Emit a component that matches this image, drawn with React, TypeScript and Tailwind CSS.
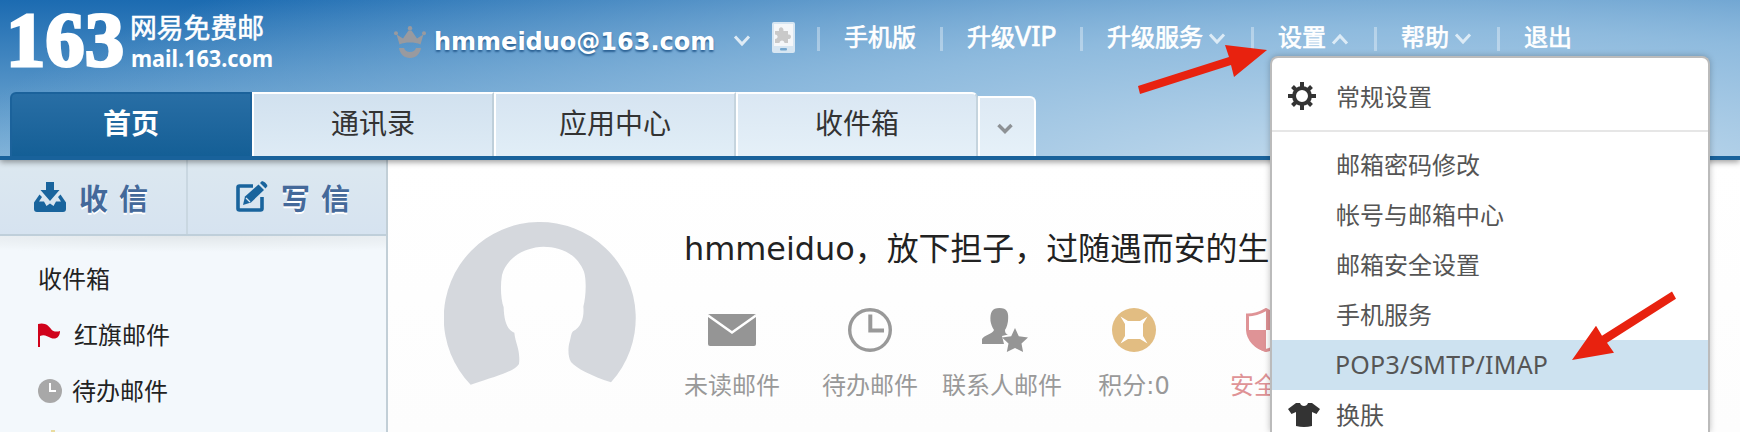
import React from "react";

const Chevron = ({ up = false, className = "" }: { up?: boolean; className?: string }) => (
  <svg width="18" height="14" viewBox="0 0 18 14" className={className}>
    <path
      d={up ? "M2 11.500 9 4l7 7.500" : "M2 2.500 9 10l7-7.500"}
      fill="none"
      stroke="currentColor"
      strokeWidth="3"
    />
  </svg>
);

const Logo = () => (
  <div className="flex w-[290px] shrink-0 pt-[6px] pl-[8px]">
    <svg width="120" height="72" viewBox="0 0 120 72" fill="#fff" stroke="#fff" strokeWidth="3" className="shrink-0">
      <text x="-2" y="59.500" fontSize="79" fontWeight="700" fontFamily="Liberation Serif" textLength="118" lengthAdjust="spacingAndGlyphs">
        163
      </text>
    </svg>
    <div className="ml-[2px] pt-[8px] whitespace-nowrap">
      <div className="text-[26.800px] leading-[30px] [-webkit-text-stroke:0.6px_white]">网易免费邮</div>
      <svg width="150" height="32" viewBox="0 0 150 32" fill="#fff" className="block">
        <text x="1" y="22.500" fontSize="24" fontWeight="700" fontFamily="Noto Sans, sans-serif" textLength="142" lengthAdjust="spacingAndGlyphs">
          mail.163.com
        </text>
      </svg>
    </div>
  </div>
);

const Crown = () => (
  <svg width="32" height="32" viewBox="0 0 32 32" fill="#999a9f">
    <path d="M5.500 18.500 2.600 8.500 9 12.500l5.500-8h3l5.500 8 6.400-4L26.500 18.500c-3-1.500-6.500-2-10.500-2s-7.500.5-10.500 2z" />
    <circle cx="16" cy="2.200" r="2.200" />
    <circle cx="2" cy="7.300" r="2" />
    <circle cx="30" cy="7.300" r="2" />
    <path d="M5 22h5c.8 2.800 3 4 6 4s5.200-1.200 6-4h5c-1 6-5 10-11 10S6 28 5 22z" />
  </svg>
);

const PhoneIcon = () => (
  <svg width="23" height="31" viewBox="0 0 23 31">
    <rect width="23" height="31" rx="2" fill="#d7e6f2" />
    <rect x="2" y="2" width="19" height="22" fill="#f5f7f9" />
    <path d="M3 9h4c-1-5 5-5 4.500 0H16v3.500c4-1 4 5 0 4.500V21h-3.500c0-3.500-5-3.500-5 0H3v-4c3.500 0 3.500-4.500 0-4.500z" fill="#c9c9c9" />
    <rect x="8" y="26" width="7" height="2.500" rx="1" fill="#77a8cf" />
  </svg>
);

const navItems = [
  { label: "手机版", w: "w-[123px]", arrow: "" },
  { label: "升级", latin: "VIP", w: "w-[140px]", arrow: "" },
  { label: "升级服务", w: "w-[171px]", arrow: "down" },
  { label: "设置", w: "w-[123px]", arrow: "up" },
  { label: "帮助", w: "w-[123px]", arrow: "down" },
  { label: "退出", w: "w-[123px]", arrow: "" },
];

const TopBar = () => (
  <div className="flex h-[92px] items-start text-white">
    <Logo />
    <div className="ml-[104px] flex h-[74px] items-center">
      <div className="mt-[10px]"><Crown /></div>
      <span className="ml-[8px] w-[285px] pt-[9px] text-[24px] leading-8 font-bold [text-shadow:0_2px_2px_#2b6194]">
        hmmeiduo@163.com
      </span>
      <Chevron className="mt-2 ml-[14px] text-[#dfebf5]" />
      <div className="ml-[21px]"><PhoneIcon /></div>
    </div>
    <nav className="ml-[22px] flex h-[76px] items-center">
      {navItems.map((n) => (
        <div key={n.label + n.w} className={`flex shrink-0 items-center ${n.w}`}>
          <i className="mt-[2px] mr-6 h-6 w-[3px] bg-white/35" />
          <span className="text-[24px] leading-8 whitespace-nowrap [-webkit-text-stroke:0.7px_white]">
            {n.label}
            {n.latin && <span className="text-[27px] leading-7 [font-family:'Noto_Sans']">{n.latin}</span>}
          </span>
          {n.arrow && <Chevron up={n.arrow === "up"} className="mt-[2px] ml-[5px] shrink-0 text-[#dcebf6]" />}
        </div>
      ))}
    </nav>
  </div>
);

const Tabs = () => (
  <div className="flex h-16 items-end pl-[10px] text-[28px] text-[#333]">
    <div className="flex h-16 w-[242px] items-center justify-center rounded-tl-md border-2 border-b-0 border-[#1b629b] bg-linear-to-b from-[#286ea5] to-[#145f96] font-bold text-white">
      首页
    </div>
    <div className="flex h-16 w-[242px] items-center justify-center border-t-2 border-r-2 border-l-2 border-white border-r-[#becfda] bg-linear-to-b from-[#d1e1ef] to-[#deebf5]">
      通讯录
    </div>
    <div className="flex h-16 w-[242px] items-center justify-center border-t-2 border-r-2 border-l-2 border-white border-r-[#c5d4de] bg-linear-to-b from-[#d6e4f1] to-[#e1eef7]">
      应用中心
    </div>
    <div className="flex h-16 w-[242px] items-center justify-center rounded-tr-md border-t-2 border-r-2 border-l-2 border-white border-r-[#c5d4de] bg-linear-to-b from-[#dae7f3] to-[#e5f0f8]">
      收件箱
    </div>
    <div className="flex h-[60px] w-[58px] items-center justify-center rounded-tr-md border-2 border-b-0 border-white bg-linear-to-b from-[#dde9f4] to-[#e6f1f9] pt-1 pr-[4px]">
      <svg width="16" height="12" viewBox="0 0 16 12">
        <path d="M1.500 2 8 8.500 14.500 2" fill="none" stroke="#8d9195" strokeWidth="3.500" />
      </svg>
    </div>
  </div>
);

const InboxIcon = () => (
  <svg width="32" height="30" viewBox="0 0 32 30" fill="#19649d">
    <path d="M12 0h8v8h5.500L16 19 6.500 8H12z" />
    <path d="M5.500 12.500 8 15l-3 4.500h5l2.500 4.500 3.500-2.500 3.500 2.500 2.500-4.500h5L24 15l2.500-2.500L32 20.500V27q0 3-3 3H3q-3 0-3-3v-6.500z" />
  </svg>
);

const WriteIcon = () => (
  <svg width="32" height="32" viewBox="0 0 32 32">
    <path d="M17 5H3.500A1.500 1.500 0 0 0 2 6.500v21A1.500 1.500 0 0 0 3.500 29h21a1.500 1.500 0 0 0 1.500-1.500V16" fill="none" stroke="#19649d" strokeWidth="3.600" />
    <path d="m7 24 2-8.500L22.500 3.500l5.500 5.500L15 21.500z" fill="#19649d" />
    <path d="m24 2 2-2q4 1 5.500 5L29.500 7.500z" fill="#19649d" />
    <path d="m10 17 4 4" stroke="#d9e6f1" strokeWidth="1.200" />
  </svg>
);

const Sidebar = () => (
  <aside className="flex h-[272px] w-[388px] shrink-0 flex-col border-r-2 border-[#c2cfd7] bg-[#f3f8fc] text-[24px] text-[#222]">
    <div className="flex h-[76px] shrink-0 border-b-2 border-[#bfcfda] bg-linear-to-b from-[#dce8f0] to-[#d6e3f0] text-[29px] font-bold text-[#44699a] [text-shadow:0_2px_0_#fff]">
      <div className="flex w-[188px] items-center border-r-2 border-[#c9d7e1] pl-[34px]">
        <InboxIcon />
        <span className="mt-[7px] ml-[13px] tracking-[11px]">收信</span>
      </div>
      <div className="flex flex-1 items-center pl-[48px]">
        <WriteIcon />
        <span className="mt-[7px] ml-[13px] tracking-[11px]">写信</span>
      </div>
    </div>
    <div className="h-[16px] shrink-0 bg-[radial-gradient(ellipse_110%_100%_at_50%_0%,#e2e7ea_0%,#f3f8fc_100%)]" />
    <div className="flex h-14 shrink-0 items-center pl-[38px]">收件箱</div>
    <div className="mt-[-1px] flex h-14 shrink-0 items-center pl-[38px]">
      <svg width="23" height="24" viewBox="0 0 23 24" fill="#d0021b">
        <path d="M0 1c7-2 11 2 13 5s6 3 9 2c0 6-4 9-9 7-4-2-7-4-11-2v11H0z" />
      </svg>
      <span className="mt-px ml-[13px]">红旗邮件</span>
    </div>
    <div className="flex h-14 shrink-0 items-center pl-[38px]">
      <svg width="24" height="24" viewBox="0 0 24 24">
        <circle cx="12" cy="12" r="12" fill="#a8a8a8" />
        <path d="M12 4v8h6" fill="none" stroke="#fff" strokeWidth="2" />
      </svg>
      <span className="mt-px ml-[10px]">待办邮件</span>
    </div>
    <div className="flex h-[13px] items-end pl-[51px]">
      <i className="h-[2px] w-1 bg-[#e9dc9f]" />
    </div>
  </aside>
);

const Avatar = () => (
  <svg width="192" height="192" viewBox="132 66 576 576" className="shrink-0">
    <path
      fill="#d5d8dd"
      d="M212 554A288 288 0 1 1 633 547C575 528 530 506 513 486C503 470 504 440 509 425C513 412 513 400 519 394C545 382 553 350 550 320C558 290 560 240 552 215C530 160 480 140 430 140C370 142 320 175 306 225C300 260 303 300 311 322C312 360 320 390 343 398C346 430 362 450 357 492C345 512 300 526 212 554Z"
    />
  </svg>
);

const MailIcon = () => (
  <svg width="48" height="32" viewBox="0 0 48 32">
    <rect width="48" height="32" rx="2" fill="#959595" />
    <path d="M0 1.500 24 18.500 48 1.500" fill="none" stroke="#fff" strokeWidth="2.600" />
  </svg>
);

const ClockIcon = () => (
  <svg width="44" height="44" viewBox="0 0 44 44" fill="none" stroke="#999">
    <circle cx="22" cy="22" r="20.300" strokeWidth="3.400" />
    <path d="M22.300 6.500v16H36" strokeWidth="4" />
  </svg>
);

const ContactIcon = () => (
  <svg width="46" height="44" viewBox="0 0 46 44" fill="#959595">
    <path d="M0 36v-5c2-4 11-5 12-9-2-3-3-6-3.500-9C8 4 10 0 17.500 0S27 4 26 13c-.5 3-1 6-3 9 0 3 1 4 3 4.500l-6 1.500 2 8z" />
    <path d="m33 20 3.800 8.200L46 29.500l-6.500 6 1.600 8.500-8.100-4-8.200 4 1.700-8.500-6.500-6 9.200-1.300z" />
  </svg>
);

const CoinIcon = () => (
  <svg width="44" height="44" viewBox="0 0 44 44">
    <circle cx="22" cy="22" r="22" fill="#e2bd82" />
    <path d="M8.500 8.500 16 13h12l7.500-4.500L31 16v12l4.500 7.500L28 31H16l-7.500 4.500L13 28V16z" fill="#fff" />
  </svg>
);

const ShieldIcon = () => (
  <svg width="40" height="44" viewBox="0 0 40 44">
    <path d="M20 1.500C14 5 8 7 1.500 7v15C2 32 10 40 20 42.500 30 40 38 32 38.500 22V7C32 7 26 5 20 1.500z" fill="#fff" stroke="#df9396" strokeWidth="3" />
    <path d="M1 22h19v22C10 41 2 33 1 22zM20 2l4 2v18h-4z" fill="#df9396" />
  </svg>
);

const stats = [
  { label: "未读邮件", icon: <MailIcon />, w: "w-[96px]", gap: "" },
  { label: "待办邮件", icon: <ClockIcon />, w: "w-[96px]", gap: "ml-[42px]" },
  { label: "联系人邮件", icon: <ContactIcon />, w: "w-[120px]", gap: "ml-[24px]" },
  { label: "积分:0", icon: <CoinIcon />, w: "w-[76px]", gap: "ml-[34px]" },
];

const Welcome = () => (
  <main className="flex flex-1 overflow-hidden bg-linear-to-b from-white to-[#fdfdfd] pt-[62px] pl-[56px]">
    <Avatar />
    <div className="ml-12">
      <h1 className="mt-[3px] h-[47px] text-[31.900px] leading-[48px] whitespace-nowrap text-[#222]">
        hmmeiduo，放下担子，过随遇而安的生
      </h1>
      <div className="mt-9 flex text-[24px] leading-8 text-[#999]">
        {stats.map((s) => (
          <div key={s.label} className={`flex shrink-0 flex-col items-center whitespace-nowrap ${s.w} ${s.gap}`}>
            <div className={s.label === "联系人邮件" ? "flex h-11 items-center pl-[6px]" : "flex h-11 items-center"}>{s.icon}</div>
            <span className="mt-[18px]">{s.label}</span>
          </div>
        ))}
        <div className="ml-[58px] flex w-[72px] shrink-0 flex-col text-[#df9396]">
          <div className="flex h-11 justify-center"><ShieldIcon /></div>
          <span className="mt-[18px]">安全</span>
        </div>
      </div>
    </div>
  </main>
);

const Gear = () => (
  <svg width="28" height="28" viewBox="-14 -14 28 28" fill="none" stroke="#333">
    <circle r="8" strokeWidth="4" />
    <path d="M0-14v5M0 9v5M-14 0h5M9 0h5M-9.500-9.500-6-6M6 6l3.500 3.500M-9.500 9.500-6 6M6-6l3.500-3.500" strokeWidth="4" />
  </svg>
);

const Shirt = () => (
  <svg width="32" height="24" viewBox="0 0 32 24" fill="#333">
    <path d="M8 0h4c1 4 7 4 8 0h4l8 6-3.500 5-4.500-2v14q-8 2-16 0V9l-4.500 2L0 6z" />
  </svg>
);

const SettingsMenu = () => (
  <div className="absolute top-[56px] left-[1270px] h-[376px] w-[440px] overflow-hidden rounded-t-lg border-2 border-b-0 border-[#bbb] bg-white text-[24px] text-[#555] shadow-[0_0_6px_rgba(0,0,0,0.25)]">
    <div className="flex h-[74px] items-center border-b-2 border-[#e6e6e6] pt-1 pl-4">
      <Gear />
      <span className="mt-[3px] ml-[20px]">常规设置</span>
    </div>
    <div className="pt-2">
      {["邮箱密码修改", "帐号与邮箱中心", "邮箱安全设置", "手机服务"].map((t) => (
        <div key={t} className="flex h-[50px] items-center pt-[2px] pl-[64px]">{t}</div>
      ))}
      <div className="flex h-[50px] items-center bg-[#cde2f0] pl-[63px] text-[25px] [font-family:'Noto_Sans'] tracking-[0.2px]">
        POP3/SMTP/IMAP
      </div>
      <div className="flex h-[50px] items-center pl-4">
        <Shirt />
        <span className="mt-[2px] ml-[16px]">换肤</span>
      </div>
    </div>
  </div>
);

export default function App() {
  return (
    <div className="relative h-[432px] w-[1740px] overflow-hidden bg-white [font-family:'DejaVu_Sans','Noto_Sans_CJK_SC',sans-serif]">
      <header className="relative h-40 border-b-4 border-[#19629b] bg-[radial-gradient(ellipse_1500px_340px_at_1420px_200px,#d0e3f1_0%,#8fbbde_50%,rgba(70,140,196,0)_100%),linear-gradient(to_bottom,#1c6bb1,#7fb2d8)] shadow-[0_2px_6px_rgba(0,0,0,0.4)]">
        <TopBar />
        <Tabs />
      </header>
      <div className="flex h-[272px]">
        <Sidebar />
        <Welcome />
      </div>
      <SettingsMenu />
      <svg className="pointer-events-none absolute inset-0" width="1740" height="432" fill="#e8220f">
        <path d="M1138 86 1229 57 1225 45 1267 50 1234 77 1231 65 1140 94z" />
        <path d="M1672 291.500 1602 335.700 1596 325.700 1572 360 1614 352.700 1607 342.700 1676 298.700z" />
      </svg>
    </div>
  );
}
